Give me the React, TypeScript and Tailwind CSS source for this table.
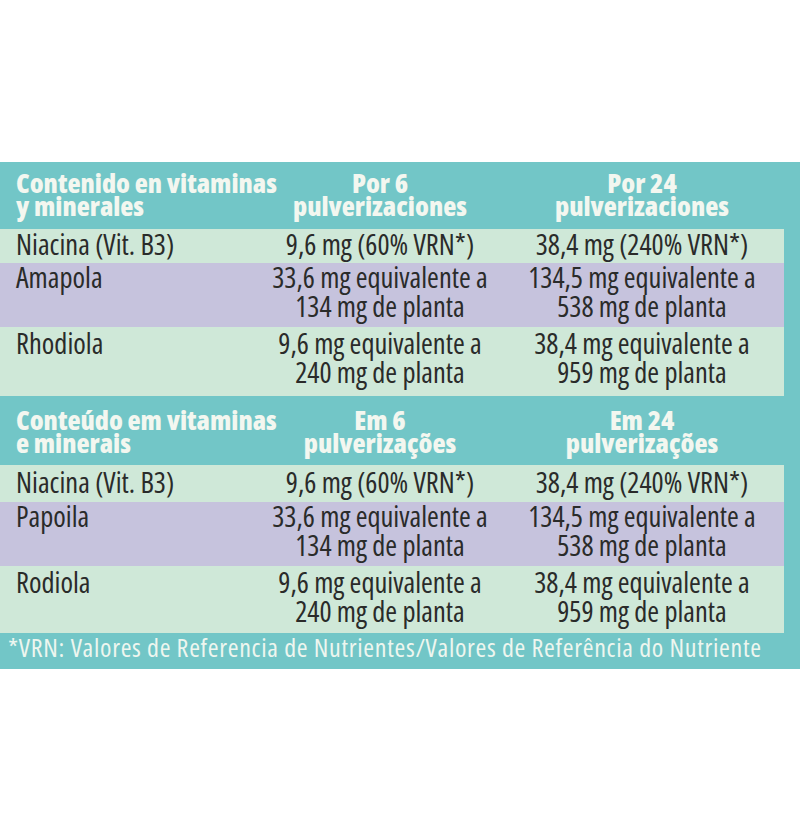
const MINT = 'bg-[#cfe8d8]'
const LILAC = 'bg-[#c6c3dd]'

type Row = { cells: string[]; bg: string; pad: string }
type Section = { head: string[]; headPad: string; rows: Row[] }

const sections: Section[] = [
  {
    head: ['Contenido en vitaminas\ny minerales', 'Por 6\npulverizaciones', 'Por 24\npulverizaciones'],
    headPad: 'h-[67px] pt-[9px]',
    rows: [
      { cells: ['Niacina (Vit. B3)', '9,6 mg (60% VRN*)', '38,4 mg (240% VRN*)'], bg: MINT, pad: 'h-[34px] pt-[1px]' },
      { cells: ['Amapola', '33,6 mg equivalente a\n134 mg de planta', '134,5 mg equivalente a\n538 mg de planta'], bg: LILAC, pad: 'h-[64px] pt-0' },
      { cells: ['Rhodiola', '9,6 mg equivalente a\n240 mg de planta', '38,4 mg equivalente a\n959 mg de planta'], bg: MINT, pad: 'h-[69px] pt-[2px]' },
    ],
  },
  {
    head: ['Conteúdo em vitaminas\ne minerais', 'Em 6\npulverizações', 'Em 24\npulverizações'],
    headPad: 'h-[69px] pt-[12px]',
    rows: [
      { cells: ['Niacina (Vit. B3)', '9,6 mg (60% VRN*)', '38,4 mg (240% VRN*)'], bg: MINT, pad: 'h-[37px] pt-[3px]' },
      { cells: ['Papoila', '33,6 mg equivalente a\n134 mg de planta', '134,5 mg equivalente a\n538 mg de planta'], bg: LILAC, pad: 'h-[64px] pt-0' },
      { cells: ['Rodiola', '9,6 mg equivalente a\n240 mg de planta', '38,4 mg equivalente a\n959 mg de planta'], bg: MINT, pad: 'h-[67px] pt-[2px]' },
    ],
  },
]

const font = "font-['Open_Sans','Liberation_Sans',sans-serif] [font-stretch:75%]"

export default function App() {
  return (
    <div className={`w-[800px] h-[832px] bg-white pt-[162px] ${font}`}>
      <div className="bg-[#72c6c7] pr-4">
        {sections.map((s) => (
          <div key={s.head[0]}>
            <div className={`grid grid-cols-[260px_240px_284px] text-[27px] leading-[23px] font-extrabold text-[#f3f7f0] whitespace-pre ${s.headPad}`}>
              <div className="pl-4">{s.head[0]}</div>
              <div className="text-center">{s.head[1]}</div>
              <div className="text-center">{s.head[2]}</div>
            </div>
            {s.rows.map((r) => (
              <div
                key={r.cells[0]}
                className={`grid grid-cols-[260px_240px_284px] text-[28.5px] leading-[29px] text-[#2a2b2a] whitespace-pre ${r.bg} ${r.pad}`}
              >
                <div className="pl-4">{r.cells[0]}</div>
                <div className="text-center">{r.cells[1]}</div>
                <div className="text-center">{r.cells[2]}</div>
              </div>
            ))}
          </div>
        ))}
        <div className="h-[36px] pl-2 text-[26px] leading-[28px] tracking-[0.7px] text-[#eef6ef] whitespace-nowrap">
          *VRN: Valores de Referencia de Nutrientes/Valores de Referência do Nutriente
        </div>
      </div>
    </div>
  )
}
